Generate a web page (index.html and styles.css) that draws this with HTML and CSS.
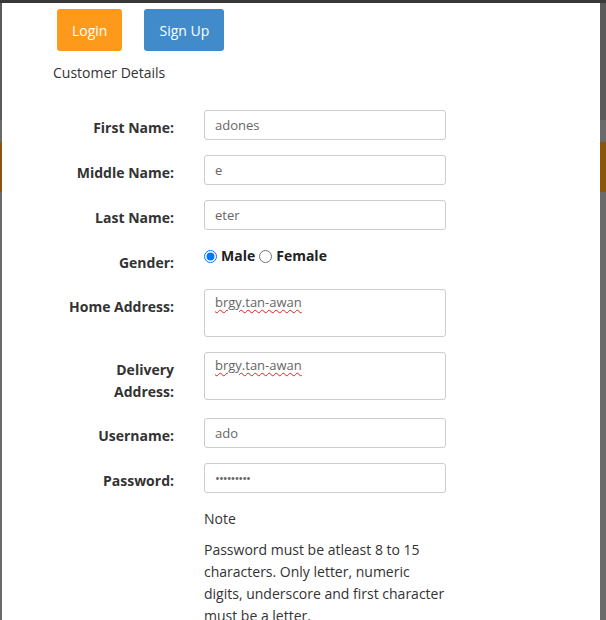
FILE: index.html
```html
<!DOCTYPE html>
<html lang="en">
<head>
    <meta charset="UTF-8">
    <meta name="viewport" content="width=device-width, initial-scale=1.0">
    <title>Customer Sign Up</title>
    <link rel="stylesheet" href="styles.css">
</head>
<body>
    <div class="modal">
        <div class="tabs">
            <button class="btn btn-login">Login</button>
            <button class="btn btn-signup">Sign Up</button>
        </div>
        <div class="title">Customer Details</div>

        <form class="signup-form">
            <div class="form-row">
                <label class="control-label">First Name:</label>
                <input class="form-control" type="text" value="adones">
            </div>
            <div class="form-row">
                <label class="control-label">Middle Name:</label>
                <input class="form-control" type="text" value="e">
            </div>
            <div class="form-row">
                <label class="control-label">Last Name:</label>
                <input class="form-control" type="text" value="eter">
            </div>
            <div class="form-row">
                <label class="control-label">Gender:</label>
                <div class="radio-group">
                    <label><input type="radio" name="gender" checked> Male</label>
                    <label><input type="radio" name="gender"> Female</label>
                </div>
            </div>
            <div class="form-row">
                <label class="control-label">Home Address:</label>
                <div class="form-control textarea"><span class="misspelled">brgy.tan-awan</span></div>
            </div>
            <div class="form-row">
                <label class="control-label">Delivery Address:</label>
                <div class="form-control textarea"><span class="misspelled">brgy.tan-awan</span></div>
            </div>
            <div class="form-row">
                <label class="control-label">Username:</label>
                <input class="form-control" type="text" value="ado">
            </div>
            <div class="form-row">
                <label class="control-label">Password:</label>
                <input class="form-control password" type="password" value="123456789">
            </div>
            <div class="form-row">
                <div></div>
                <div class="note">
                    <div class="note-title">Note</div>
                    <p>Password must be atleast 8 to 15 characters. Only letter, numeric digits, underscore and first character must be a letter.</p>
                </div>
            </div>
        </form>
    </div>
</body>
</html>
```

FILE: styles.css
```css
body {
    margin: 0;
    padding: 3px 6px 0 2px;
    height: 620px;
    box-sizing: border-box;
    overflow: hidden;
    font-family: 'Open Sans', sans-serif;
    font-size: 14px;
    line-height: 22px;
    color: #333;
    background: linear-gradient(to bottom, #5a5a5a 0, #5a5a5a 120px, #6a6a6a 120px, #6a6a6a 142px, #8a560c 142px, #8a560c 192px, #6a6a6a 192px);
    box-shadow: inset 0 3px 0 #383838;
}
.modal {
    background: #fff;
    height: 100%;
    padding: 6px 0 0 51px;
    box-sizing: border-box;
}
.tabs {
    display: flex;
    gap: 22px;
    margin-left: 4px;
}
.btn {
    height: 42px;
    padding: 0 15px;
    border: none;
    border-radius: 3px;
    color: #fff;
    font-family: 'Open Sans', sans-serif;
    font-size: 14px;
    cursor: pointer;
}
.btn-login {
    background: #fd9a1c;
}
.btn-signup {
    background: #428bca;
}
.title {
    margin-top: 11px;
    margin-bottom: 26px;
}
.signup-form {
    margin-left: 11px;
}
.form-row {
    display: grid;
    grid-template-columns: 110px 242px;
    column-gap: 30px;
    margin-bottom: 15px;
}
.control-label {
    text-align: right;
    font-weight: bold;
    padding-top: 7px;
    color: #333;
}
.form-control {
    height: 30px;
    box-sizing: border-box;
    border: 1px solid #ccc;
    border-radius: 3px;
    padding: 0 10px;
    font-family: 'Open Sans', sans-serif;
    font-size: 13px;
    color: #666;
    outline: none;
}
.password {
    letter-spacing: -1px;
}
.textarea {
    height: 48px;
    padding-top: 2px;
    line-height: 20px;
}
.misspelled {
    text-decoration: underline wavy #e02020;
    text-decoration-thickness: 1px;
    text-underline-offset: 2px;
}
.radio-group {
    display: flex;
    gap: 4px;
    align-self: start;
    font-weight: bold;
    color: #222;
}
.radio-group label {
    display: flex;
    align-items: center;
    gap: 4px;
}
.radio-group input {
    margin: 0;
    width: 13px;
    height: 13px;
}
.note-title {
    margin-bottom: 9px;
}
.note p {
    margin: 0;
}
```
